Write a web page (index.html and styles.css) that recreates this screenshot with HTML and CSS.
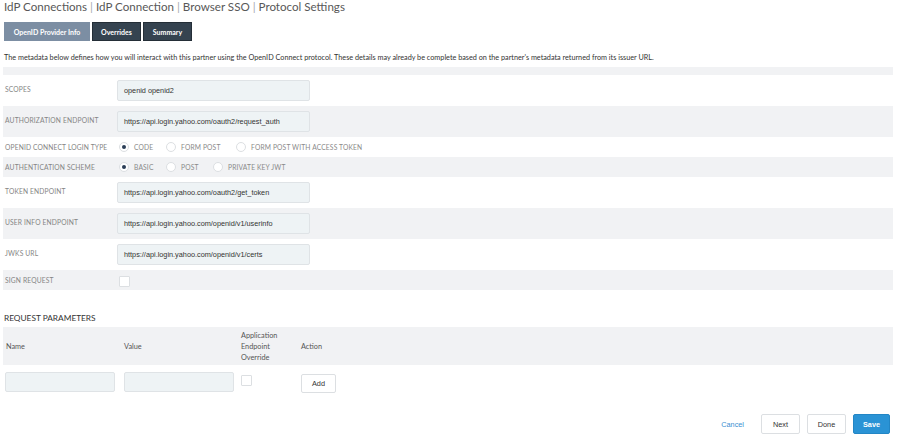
FILE: index.html
```html
<!DOCTYPE html>
<html>
<head>
<meta charset="utf-8">
<link rel="stylesheet" href="styles.css">
</head>
<body>
<div class="page">
  <h1 class="title">IdP Connections <span class="sep">|</span> IdP Connection <span class="sep">|</span> Browser SSO <span class="sep">|</span> Protocol Settings</h1>
  <div class="tabs">
    <span class="tab tab-active">OpenID Provider Info</span>
    <span class="tab">Overrides</span>
    <span class="tab">Summary</span>
  </div>
  <p class="desc">The metadata below defines how you will interact with this partner using the OpenID Connect protocol. These details may already be complete based on the partner's metadata returned from its issuer URL.</p>
  <div class="band"></div>
  <div class="form">
    <div class="row tall">
      <div class="label">SCOPES</div>
      <div class="field"><div class="input">openid openid2</div></div>
    </div>
    <div class="row tall alt">
      <div class="label">AUTHORIZATION ENDPOINT</div>
      <div class="field"><div class="input">https://api.login.yahoo.com/oauth2/request_auth</div></div>
    </div>
    <div class="row short">
      <div class="label">OPENID CONNECT LOGIN TYPE</div>
      <div class="field radios">
        <span class="radio r1"><span class="dot checked"></span>CODE</span>
        <span class="radio r2"><span class="dot"></span>FORM POST</span>
        <span class="radio"><span class="dot"></span>FORM POST WITH ACCESS TOKEN</span>
      </div>
    </div>
    <div class="row short alt">
      <div class="label">AUTHENTICATION SCHEME</div>
      <div class="field radios">
        <span class="radio r1"><span class="dot checked"></span>BASIC</span>
        <span class="radio r2b"><span class="dot"></span>POST</span>
        <span class="radio"><span class="dot"></span>PRIVATE KEY JWT</span>
      </div>
    </div>
    <div class="row tall">
      <div class="label">TOKEN ENDPOINT</div>
      <div class="field"><div class="input">https://api.login.yahoo.com/oauth2/get_token</div></div>
    </div>
    <div class="row tall alt">
      <div class="label">USER INFO ENDPOINT</div>
      <div class="field"><div class="input">https://api.login.yahoo.com/openid/v1/userinfo</div></div>
    </div>
    <div class="row tall">
      <div class="label">JWKS URL</div>
      <div class="field"><div class="input">https://api.login.yahoo.com/openid/v1/certs</div></div>
    </div>
    <div class="row short alt">
      <div class="label">SIGN REQUEST</div>
      <div class="field"><span class="check"></span></div>
    </div>
  </div>

  <h2 class="section">REQUEST PARAMETERS</h2>
  <div class="table">
    <div class="thead">
      <div class="th">Name</div>
      <div class="th">Value</div>
      <div class="th">Application<br>Endpoint<br>Override</div>
      <div class="th">Action</div>
    </div>
    <div class="trow">
      <div class="td"><div class="input small"></div></div>
      <div class="td"><div class="input small"></div></div>
      <div class="td"><span class="check"></span></div>
      <div class="td"><span class="btn add">Add</span></div>
    </div>
  </div>

  <div class="footer">
    <span class="link">Cancel</span>
    <span class="btn fbtn">Next</span>
    <span class="btn fbtn">Done</span>
    <span class="btn fbtn save">Save</span>
  </div>
</div>
</body>
</html>
```
FILE: styles.css
```css
* { box-sizing: border-box; }
html, body { margin: 0; padding: 0; background: #fff; }
body { font-family: "Lato", "Open Sans", sans-serif; color: #333; }
.page { width: 893px; padding-left: 3px; }

.title {
  margin: 0;
  padding: 0 0 0 1px;
  height: 22px;
  font-size: 11.6px;
  line-height: 14px;
  font-weight: 400;
  color: #585858;
}
.title .sep { color: #a5aab0; }

.tabs { display: flex; gap: 2px; padding-left: 1px; height: 19px; }
.tab {
  display: inline-flex; align-items: center; justify-content: center;
  background: #354350;
  border: 1px solid #242e37;
  color: #fff;
  font-size: 7px;
  font-weight: 700;
  padding: 0;
  height: 19px;
}
.tab-active { background: #7c8ea3; border-color: #7c8ea3; width: 86px; }
.tab:nth-child(2) { width: 49px; }
.tab:nth-child(3) { width: 49px; }

.desc {
  margin: 0;
  padding: 13px 0 0 1px;
  height: 26px;
  font-size: 7.25px;
  line-height: 8px;
  color: #333;
}

.band { height: 8px; background: #f1f2f4; }

.row {
  display: grid;
  grid-template-columns: 114px 1fr;
  align-items: center;
}
.row.tall { height: 31px; }
.row.short { height: 20px; }
.row.alt { background: #f1f2f4; }
.label {
  padding-left: 2px;
  font-size: 6.7px;
  letter-spacing: 0.15px;
  color: #858585;
  align-self: start;
}
.row.tall .label { padding-top: 10px; }
.row.short .label { align-self: center; }

.input {
  width: 193px;
  height: 21px;
  background: #eef3f5;
  border: 1px solid #dfe3e6;
  border-radius: 2px;
  font-family: "Liberation Sans", Arial, sans-serif;
  font-size: 7.3px;
  color: #333;
  padding: 0 6px;
  display: flex; align-items: center;
}
.input.small { width: 110px; height: 20px; }

.radios { display: flex; align-items: center; }
.radio {
  display: inline-flex; align-items: center;
  font-size: 6.7px;
  letter-spacing: 0.15px;
  color: #8a8a8a;
}
.dot {
  width: 10px; height: 10px;
  border-radius: 50%;
  border: 1px solid #dcdfe2;
  background: #fff;
  margin: 0 5px 0 2px;
  position: relative;
  flex: none;
}
.dot.checked::after {
  content: "";
  position: absolute;
  left: 2px; top: 2px;
  width: 4px; height: 4px;
  border-radius: 50%;
  background: #2b3e57;
}
.r1 { width: 47px; }
.r2 { width: 70px; }
.r2b { width: 47px; }

.check {
  display: inline-block;
  width: 11px; height: 11px;
  border: 1px solid #dcdfe2;
  background: #fff;
  border-radius: 1px;
}
.row .check { margin-left: 2px; }

.section {
  margin: 0;
  padding: 23px 0 0 1px;
  height: 37px;
  font-size: 8.3px;
  font-weight: 400;
  color: #333;
}

.thead {
  display: grid;
  grid-template-columns: 118px 117px 60px 1fr;
  align-items: center;
  height: 38px;
  background: #f1f2f4;
  padding-left: 3px;
}
.th { font-size: 7.3px; line-height: 11px; color: #555; }
.trow {
  display: grid;
  grid-template-columns: 119px 117px 60px 1fr;
  align-items: center;
  padding-top: 5px;
  padding-left: 2px;
}
.trow .check { margin-top: -3px; display: block; }
.trow .td:last-child { align-self: start; }

.btn {
  display: inline-flex; align-items: center; justify-content: center;
  background: #fff;
  border: 1px solid #dcdfe2;
  border-radius: 2px;
  font-family: "Liberation Sans", Arial, sans-serif;
  font-size: 7.3px;
  color: #333;
}
.add { width: 35px; height: 19px; }

.footer {
  display: flex;
  justify-content: flex-end;
  align-items: center;
  gap: 7px;
  margin-top: 21px;
}
.link {
  font-family: "Liberation Sans", Arial, sans-serif;
  font-size: 7.3px;
  color: #3a8fd1;
  margin-right: 10px;
}
.fbtn { width: 39px; height: 20px; }
.save {
  background: #2a93d5;
  border-color: #2386c5;
  color: #fff;
  font-weight: 700;
  width: 37px;
  margin-right: 3px;
}
```
